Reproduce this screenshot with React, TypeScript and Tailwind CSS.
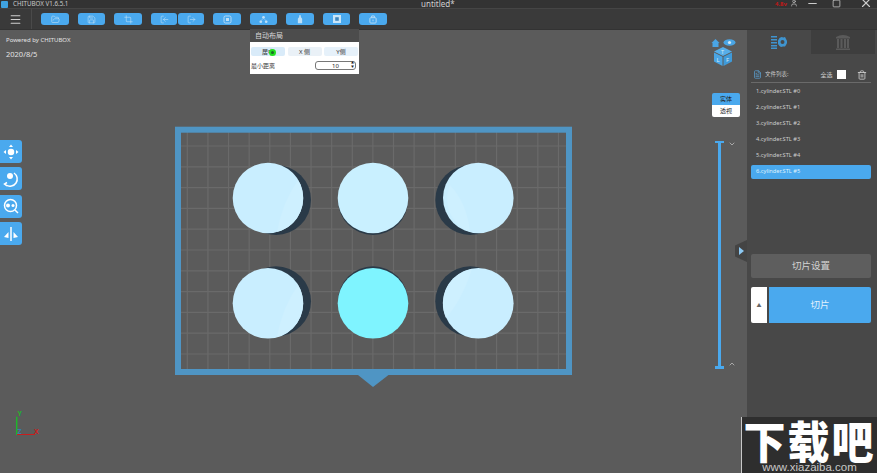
import type { ReactNode } from 'react';
import { Menu, Minus, Square, X, User, Trash2, ChevronDown, ChevronUp, FileText, FolderOpen, Save, Crop, LogIn, LogOut } from 'lucide-react';

const FILES = ['1.cylinder.STL #0', '2.cylinder.STL #1', '3.cylinder.STL #2', '4.cylinder.STL #3', '5.cylinder.STL #4', '6.cylinder.STL #5'];

const ICON = 'text-[#bfe0f7]';

const TOOLS: { icon: ReactNode; w: string; gap: string }[] = [
  { icon: <FolderOpen size={9} strokeWidth={1.6} className={ICON} />, w: 'w-[28px]', gap: 'mr-[9px]' },
  { icon: <Save size={9} strokeWidth={1.6} className={ICON} />, w: 'w-[27px]', gap: 'mr-[9px]' },
  { icon: <Crop size={9} strokeWidth={1.6} className={ICON} />, w: 'w-[28px]', gap: 'mr-[9px]' },
  { icon: <LogIn size={9} strokeWidth={1.6} className={`${ICON} rotate-180`} />, w: 'w-[26px]', gap: 'mr-[1px]' },
  { icon: <LogOut size={9} strokeWidth={1.6} className={ICON} />, w: 'w-[26px]', gap: 'mr-[9px]' },
  {
    icon: (
      <svg width="9" height="9" viewBox="0 0 9 9" fill="none" stroke="#bfe0f7" strokeWidth="0.9">
        <rect x="1" y="1" width="7" height="7" rx="1.5" />
        <rect x="3" y="3" width="3" height="3" fill="#bfe0f7" stroke="none" />
      </svg>
    ),
    w: 'w-[28px]',
    gap: 'mr-[9px]',
  },
  {
    icon: (
      <svg width="9" height="9" viewBox="0 0 10 9" fill="#bfe0f7">
        <circle cx="5" cy="2" r="1.5" />
        <circle cx="2" cy="7" r="1.5" />
        <circle cx="8" cy="7" r="1.5" />
        <path d="M5 3 L2 6 M5 3 L8 6" stroke="#bfe0f7" strokeWidth="0.6" />
      </svg>
    ),
    w: 'w-[27px]',
    gap: 'mr-[9px]',
  },
  {
    icon: (
      <svg width="6" height="9" viewBox="0 0 7 10" fill="#bfe0f7">
        <path d="M2.5 0 H4.5 V2 L6 4 V9.5 H1 V4 L2.5 2 Z" />
      </svg>
    ),
    w: 'w-[28px]',
    gap: 'mr-[9px]',
  },
  {
    icon: (
      <svg width="8" height="8" viewBox="0 0 9 9">
        <rect width="9" height="9" fill="#c9e5f8" />
        <rect x="2.5" y="2.5" width="4" height="4" fill="#3f86bb" />
      </svg>
    ),
    w: 'w-[27px]',
    gap: 'mr-[9px]',
  },
  {
    icon: (
      <svg width="8" height="9" viewBox="0 0 9 10" fill="none" stroke="#bfe0f7">
        <rect x="1" y="3" width="7" height="6" rx="1" />
        <path d="M3 3 V1 H6 V3 M4.5 5 V7" />
      </svg>
    ),
    w: 'w-[28px]',
    gap: '',
  },
];

// 六个圆柱：x, y 为圆心，sx, sy 为阴影偏移
const CYLINDERS = [
  { x: 268, y: 198, sx: 8, sy: 2, fill: '#c9eeff' },
  { x: 373, y: 198, sx: 0, sy: 2, fill: '#c9f0ff' },
  { x: 478.3, y: 198, sx: -8, sy: 2, fill: '#c9eeff' },
  { x: 268, y: 303.3, sx: 8, sy: -2, fill: '#c9eeff' },
  { x: 373, y: 303.3, sx: 0, sy: -2, fill: '#7ff4ff' },
  { x: 478.3, y: 303.3, sx: -8, sy: -2, fill: '#c9eeff' },
];

const GRID_X = Array.from({ length: 19 }, (_, i) => 187.3 + i * 20.62);
const GRID_Y = Array.from({ length: 11 }, (_, i) => 146 + i * 20.8);

function Plate() {
  return (
    <svg className="absolute left-0 top-0" width="747" height="443" viewBox="0 30 747 443">
      {GRID_X.map((x) => (
        <line key={x} x1={x} y1={132} x2={x} y2={369} stroke="#6a6a6a" strokeWidth="1.2" />
      ))}
      {GRID_Y.map((y) => (
        <line key={y} x1={181} y1={y} x2={566} y2={y} stroke="#6a6a6a" strokeWidth="1.2" />
      ))}
      <rect x="178" y="129.7" width="391" height="242.3" fill="none" stroke="#4f95c4" strokeWidth="6" />
      <path d="M358 375 H388.5 L373 387 Z" fill="#4f95c4" />
      {CYLINDERS.map((c) => (
        <g key={`${c.x}-${c.y}`}>
          <circle cx={c.x + c.sx} cy={c.y + c.sy} r="35" fill="#2a3a48" />
          <circle cx={c.x} cy={c.y} r="35.3" fill={c.fill} />
        </g>
      ))}
      <path d="M298 180 A35 35 0 0 1 277 232 Q282 203 298 180 Z" fill="#cef0ff" />
      <path d="M298 285 A35 35 0 0 1 277 337 Q282 308 298 285 Z" fill="#cef0ff" />
      <path d="M450 185 Q467 203 470 232 A35 35 0 0 1 450 185 Z" fill="#cef0ff" />
      <path d="M472 269 A35 35 0 0 0 446 318 Q462 300 472 269 Z" fill="#cef0ff" />
    </svg>
  );
}

function Gizmo() {
  return (
    <svg className="absolute left-[710px] top-[8px]" width="30" height="30" viewBox="0 0 30 30">
      <path d="M1.5 5 L5.5 1 L9.5 5 H8.5 V9 H2.5 V5 Z" fill="#4aa5e4" />
      <ellipse cx="19.5" cy="4.5" rx="6" ry="3.2" fill="#4aa5e4" />
      <circle cx="19.5" cy="4.5" r="1.6" fill="#d5e8f5" />
      <path d="M4 13.5 L13 9 L22 13.5 L13 18 Z" fill="#56aee9" />
      <path d="M4 14.5 L12.5 18.7 V28 L4 23.5 Z" fill="#4aa5e4" />
      <path d="M13.5 18.7 L22 14.5 V23.5 L13.5 28 Z" fill="#3f9ad9" />
      <text x="11" y="15.5" fontSize="5.5" fill="#d5e8f5">T</text>
      <text x="6.5" y="24" fontSize="6" fill="#d5e8f5">L</text>
      <text x="16" y="24" fontSize="6" fill="#d5e8f5">F</text>
    </svg>
  );
}

function SideTool({ children }: { children: ReactNode }) {
  return (
    <div className="flex h-[23px] w-[22px] items-center justify-center rounded-r-[3px] bg-[#4aa9ee]">
      <svg width="18" height="18" viewBox="0 0 18 18" fill="none" stroke="white" strokeWidth="1.5">
        {children}
      </svg>
    </div>
  );
}

export default function App() {
  return (
    <div className="relative flex h-[473px] w-[877px] flex-col overflow-hidden bg-[#5b5b5b] font-['Noto_Sans','Noto_Sans_CJK_SC',sans-serif] text-white">
      {/* 标题栏 */}
      <header className="relative flex h-[8px] items-center bg-[#333333]">
        <div className="ml-[1px] mr-[5px] h-[7px] w-[7px] rounded-[1px] bg-[#3fa2e0]" />
        <span className="text-[6.2px] leading-[8px] text-[#c9c9c9]">CHITUBOX V1.6.5.1</span>
        <span className="absolute left-[421px] top-0 text-[8px] leading-[8px] text-[#d0d0d0]">untitled*</span>
        <span className="absolute left-[775px] top-0 text-[6px] font-bold leading-[8px] text-[#c01818]">4.8v</span>
        <div className="absolute left-[790px] top-0 flex h-[6px] items-center text-[#cccccc]">
          <User size={8} />
          <span className="ml-[7px] flex w-[14px] justify-center"><Minus size={13} /></span>
          <span className="ml-[10.5px] flex w-[14px] justify-center"><Square size={9} /></span>
          <span className="ml-[15.5px] flex w-[14px] justify-center"><X size={14} /></span>
        </div>
      </header>

      {/* 工具栏 */}
      <nav className="flex h-[21px] items-center border-t border-[#454545] bg-[#3a3a3a]">
        <div className="flex h-full w-[32px] items-center justify-center border-r border-[#4a4a4a]">
          <Menu size={13} className="text-[#d0d0d0]" />
        </div>
        <div className="ml-[9px] flex items-center">
          {TOOLS.map(({ icon, w, gap }, i) => (
            <div key={i} className={`flex h-[12px] items-center justify-center rounded-[3px] bg-[#4aa9ee] ${w} ${gap}`}>
              {icon}
            </div>
          ))}
        </div>
      </nav>

      <div className="flex min-h-0 flex-1 border-t border-[#333333]">
        {/* 视口 */}
        <main className="relative w-[747px] bg-[#5b5b5b]">
          <Plate />
          <div className="absolute left-[6px] top-[7px] text-[6px] leading-none text-[#e2e2e2]">Powered by CHITUBOX</div>
          <div className="absolute left-[6px] top-[21px] text-[7.5px] leading-none text-[#e2e2e2]">2020/8/5</div>

          {/* 自动布局 */}
          <div className="absolute left-[250px] top-[-1px] w-[109px] text-[#333333]">
            <div className="flex h-[13px] items-center bg-[#4c4c4c] pl-[5px] text-[7px] leading-none text-[#d8d8d8]">自动布局</div>
            <div className="h-[32px] bg-white pl-[1px] pt-[5px]">
              <div className="flex gap-[2.5px]">
                <div className="relative flex h-[9px] w-[34px] items-center justify-center rounded-[2px] bg-[#d9ebf9] text-[6px] leading-none">
                  居中
                  <span className="absolute left-[18px] top-[2px] h-[7px] w-[7px] rounded-full border-2 border-[#22e022] bg-[#1a6a2a]" />
                </div>
                <div className="flex h-[9px] w-[34px] items-center justify-center rounded-[2px] bg-[#eaf1f7] text-[6px] leading-none">X 侧</div>
                <div className="flex h-[9px] w-[34px] items-center justify-center rounded-[2px] bg-[#e6f1fa] text-[6px] leading-none">Y侧</div>
              </div>
              <div className="mt-[5px] flex items-center justify-between pr-[3px]">
                <span className="text-[6px] leading-none">最小距离</span>
                <div className="relative flex h-[9px] w-[41px] items-center justify-center rounded-[3px] border border-[#777777] text-[6px] leading-none text-[#222222]">
                  10
                  <span className="absolute right-[1px] top-0 flex flex-col text-[3px] leading-[3.5px]">
                    <span>▲</span>
                    <span>▼</span>
                  </span>
                </div>
              </div>
            </div>
          </div>

          {/* 左侧工具 */}
          <div className="absolute left-0 top-[110px] flex flex-col gap-[4.4px]">
            <SideTool>
              <circle cx="9" cy="9" r="2.5" fill="white" />
              <path d="M9 1.5 L7 4 H11 Z M9 16.5 L7 14 H11 Z M1.5 9 L4 7 V11 Z M16.5 9 L14 7 V11 Z" fill="white" stroke="none" />
            </SideTool>
            <SideTool>
              <circle cx="8" cy="6" r="3" fill="white" stroke="none" />
              <path d="M12 3 A6.5 6.5 0 0 1 4 15 M5 12.5 L2.5 14 L5 16" />
            </SideTool>
            <SideTool>
              <circle cx="8.5" cy="8.5" r="6" />
              <circle cx="6" cy="8.5" r="2" fill="white" stroke="none" />
              <circle cx="11" cy="8.5" r="1.5" fill="white" stroke="none" />
              <path d="M13 13 L16 16" />
            </SideTool>
            <SideTool>
              <path d="M9 2 V16" />
              <path d="M2 12 L6.5 7 V13 Z M16 12 L11.5 7 V13 Z" fill="white" stroke="none" />
            </SideTool>
          </div>

          <Gizmo />

          {/* 实体 / 透视 */}
          <div className="absolute left-[712px] top-[63px] w-[28px] overflow-hidden rounded-[2px] text-center text-[6px] leading-[12px] text-[#222222]">
            <div className="h-[12px] bg-[#4aa9ee]">实体</div>
            <div className="h-[12px] bg-white">透视</div>
          </div>

          {/* 层滑块 */}
          <div className="absolute left-[715px] top-[111px] h-[2px] w-[9px] bg-[#4aa9ee]" />
          <div className="absolute left-[718px] top-[112px] h-[226px] w-[3px] bg-[#4aa9ee]" />
          <div className="absolute left-[715px] top-[336px] h-[3px] w-[9px] bg-[#4aa9ee]" />
          <ChevronDown size={8} className="absolute left-[728px] top-[110px] text-[#d0d0d0]" />
          <ChevronUp size={8} className="absolute left-[728px] top-[330px] text-[#d0d0d0]" />

          {/* 面板开关 */}
          <div className="absolute left-[735px] top-[210px] flex h-[22px] w-[12px] items-center justify-center bg-[#444444] [clip-path:polygon(100%_0,100%_100%,0_75%,0_25%)]">
            <span className="h-0 w-0 border-y-[4px] border-l-[5px] border-y-transparent border-l-[#8cc8f2]" />
          </div>

          {/* 坐标轴 */}
          <svg className="absolute left-[14px] top-[379px]" width="30" height="30" viewBox="0 0 30 30">
            <path d="M2.7 7.7 V26" stroke="#1fb52c" strokeWidth="1.5" />
            <path d="M3 25.5 H21" stroke="#c91d1d" strokeWidth="1" />
            <text x="3.5" y="6.5" fontSize="7" fontWeight="bold" fill="#1fb52c">Y</text>
            <text x="20" y="25" fontSize="7" fontWeight="bold" fill="#c91d1d">X</text>
            <text x="3.5" y="24.5" fontSize="7" fontWeight="bold" fill="#3d7ba8">Z</text>
          </svg>
        </main>

        {/* 右侧面板 */}
        <aside className="flex w-[130px] flex-col bg-[#484848]">
          <div className="flex h-[24px]">
            <div className="flex w-[64px] items-center justify-center">
              <svg width="16" height="13" viewBox="0 0 16 13" fill="#3f94cf">
                <path d="M0 0 H6 V1.5 H0 Z M0 3 H6 V4.5 H0 Z M0 6 H6 V7.5 H0 Z M0 9 H6 V10.5 H0 Z M0 11.5 H6 V13 H0 Z" />
                <path fillRule="evenodd" d="M10.5 1 L12.5 1.5 L14 1 L15 3 L16 5 V7 L15 9 L14 10.5 H12 L10 11 L8.5 10 L7 8 V4.5 L8.5 2 Z M11.5 4 A2 2 0 1 0 11.5 8 A2 2 0 1 0 11.5 4 Z" />
              </svg>
            </div>
            <div className="flex w-[64px] items-center justify-center bg-[#3e3e3e]">
              <svg width="16" height="16" viewBox="0 0 16 16" fill="#5a5a5a">
                <path d="M1 3 Q8 -1 15 3 V4.5 H1 Z" />
                <path d="M2 5 H4 V14 H2 Z M5.5 5 H7.5 V14 H5.5 Z M9 5 H11 V14 H9 Z M12 5 H14 V14 H12 Z" />
                <path d="M1 14.5 H15 V16 H1 Z" />
              </svg>
            </div>
          </div>

          <div className="ml-[4px] mr-[6px] mt-[12px] flex h-[17px] items-center whitespace-nowrap border-b border-[#6a6a6a] pl-[2px] pr-[4px] pt-[1px]">
            <FileText size={9} className="text-[#5a9ccc]" />
            <span className="ml-[3px] text-[5.5px] leading-none text-[#c8c8c8]">文件列表:</span>
            <span className="ml-auto text-[6px] leading-none text-[#d0d0d0]">全选</span>
            <div className="ml-[4.5px] h-[9px] w-[9px] bg-white" />
            <Trash2 size={10} className="ml-[11px] text-[#cfcfcf]" />
          </div>

          <ul className="ml-[4px] mr-[6px] mt-[1px] flex flex-col">
            {FILES.map((name, i) => (
              <li
                key={name}
                className={`my-[1px] flex h-[14px] items-center rounded-[2px] pl-[5px] text-[5.7px] leading-none ${i === 5 ? 'bg-[#4aa9ee] text-[#dff0fc]' : 'text-[#cdcdcd]'}`}
              >
                {name}
              </li>
            ))}
          </ul>

          <button className="ml-[4px] mr-[6px] mt-[74px] flex h-[24px] items-center justify-center rounded-[2px] bg-[#5e5e5e] text-[9.5px] leading-none text-[#d4d4d4]">
            切片设置
          </button>

          <div className="ml-[4px] mr-[6px] mt-[9px] flex h-[36px] gap-[2px]">
            <div className="flex w-[16px] items-center justify-center rounded-l-[2px] bg-white text-[5px] leading-none text-[#666666]">▲</div>
            <button className="flex flex-1 items-center justify-center rounded-r-[2px] bg-[#4aa9ee] text-[9.5px] leading-none text-[#e2f2fd]">切片</button>
          </div>
        </aside>
      </div>

      {/* 水印 */}
      <div className="absolute left-[741px] top-[417px] flex h-[56px] w-[136px] flex-col items-center border-l border-[#c8c8c8] bg-[#2e2e2e]">
        <span className="h-[45px] origin-top scale-y-[1.06] font-['Noto_Sans_CJK_SC',sans-serif] text-[42px] font-black leading-[44px] tracking-[2px] text-white">下载吧</span>
        <span className="font-['Liberation_Sans',sans-serif] text-[11.5px] leading-[11px] text-[#c8c8c8]">www.xiazaiba.com</span>
      </div>
    </div>
  );
}
